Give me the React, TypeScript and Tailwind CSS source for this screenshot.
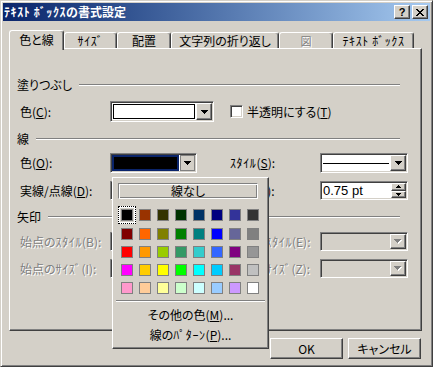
import React from "react";

const raised =
  "border border-t-white border-l-white border-r-[#404040] border-b-[#404040] shadow-[inset_-1px_-1px_#808080]";
const sunken =
  "border border-t-[#808080] border-l-[#808080] border-r-white border-b-white shadow-[inset_1px_1px_#404040,inset_-1px_-1px_#d4d0c8] p-[1px]";
const etched =
  "border border-t-[#808080] border-l-[#808080] border-r-white border-b-white shadow-[inset_1px_1px_#ffffff,inset_-1px_-1px_#808080]";
const disabledText = "text-[#808080] [text-shadow:1px_1px_0_#ffffff]";

function H({ children }: { children: React.ReactNode }) {
  return <span className="[font-feature-settings:normal] tracking-[0.6px]">{children}</span>;
}

function Arrow({ disabled }: { disabled?: boolean }) {
  if (disabled)
    return (
      <svg width="8" height="5" viewBox="0 0 8 5" shapeRendering="crispEdges">
        <path d="M1 1h7v1H1zM2 2h5v1H2zM3 3h3v1H3zM4 4h1v1H4z" fill="#ffffff" />
        <path d="M0 0h7v1H0zM1 1h5v1H1zM2 2h3v1H2zM3 3h1v1H3z" fill="#808080" />
      </svg>
    );
  return (
    <svg width="7" height="4" viewBox="0 0 7 4" shapeRendering="crispEdges">
      <path d="M0 0h7v1H0zM1 1h5v1H1zM2 2h3v1H2zM3 3h1v1H3z" fill="#000000" />
    </svg>
  );
}

function DropBtn({ disabled }: { disabled?: boolean }) {
  return (
    <div className={`w-[16px] h-full bg-[#d4d0c8] flex items-center justify-center ${raised}`}>
      <Arrow disabled={disabled} />
    </div>
  );
}

function HeaderRow({ label }: { label: string }) {
  return (
    <div className="flex items-center h-[14px] pl-[7px] pr-[21px]">
      <span className="leading-[14px]">{label}</span>
      <div className="flex-1 ml-[7px] border-t border-t-[#808080] border-b border-b-white" />
    </div>
  );
}

const palette = [
  ["#000000", "#993300", "#333300", "#003300", "#003366", "#000080", "#333399", "#333333"],
  ["#800000", "#FF6600", "#808000", "#008000", "#008080", "#0000FF", "#666699", "#808080"],
  ["#FF0000", "#FF9900", "#99CC00", "#339966", "#33CCCC", "#3366FF", "#800080", "#969696"],
  ["#FF00FF", "#FFCC00", "#FFFF00", "#00FF00", "#00FFFF", "#00CCFF", "#993366", "#C0C0C0"],
  ["#FF99CC", "#FFCC99", "#FFFF99", "#CCFFCC", "#CCFFFF", "#99CCFF", "#CC99FF", "#FFFFFF"],
];

function Tab({ w, selected, children }: { w: number; selected?: boolean; children: React.ReactNode }) {
  const base =
    "flex items-center justify-center rounded-t-[3px] border-t border-l border-r border-t-white border-l-white border-r-[#404040] shadow-[inset_-1px_0_#808080] bg-[#d4d0c8] whitespace-nowrap";
  return (
    <div
      className={`${base} ${selected ? "relative z-10 h-[20px] -mb-[2px] pb-[2px]" : "h-[16px]"}`}
      style={{ width: w }}
    >
      <span className="leading-[14px]">{children}</span>
    </div>
  );
}

export default function App() {
  return (
    <div className="relative w-[433px] h-[367px] bg-[#d4d0c8] text-black text-[12px] whitespace-nowrap [font-family:'Noto_Sans_CJK_JP','Noto_Sans_CJK_SC',sans-serif] [font-feature-settings:'palt'] border border-t-[#d4d0c8] border-l-[#d4d0c8] border-r-[#404040] border-b-[#404040] shadow-[inset_1px_1px_#ffffff,inset_-1px_-1px_#808080] p-[2px] overflow-hidden">
      {/* Title bar */}
      <div className="h-[18px] flex items-center justify-between pl-[1px] pr-[2px] bg-linear-to-r from-[#0a246a] to-[#a6caf0]">
        <span className="text-white font-bold leading-[14px]">
          <H>ﾃｷｽﾄ ﾎﾞｯｸｽ</H>の書式設定
        </span>
        <div className="flex gap-[2px]">
          <div className={`w-[16px] h-[14px] bg-[#d4d0c8] flex items-center justify-center ${raised}`}>
            <span className="[font-family:'Liberation_Sans',sans-serif] font-bold text-[11px] leading-[11px]">?</span>
          </div>
          <div className={`w-[16px] h-[14px] bg-[#d4d0c8] flex items-center justify-center ${raised}`}>
            <svg width="8" height="7" viewBox="0 0 8 7" shapeRendering="crispEdges">
              <path
                d="M0 0h2v1H0zM6 0h2v1H6zM1 1h2v1H1zM5 1h2v1H5zM2 2h4v1H2zM3 3h2v1H3zM2 4h4v1H2zM1 5h2v1H1zM5 5h2v1H5zM0 6h2v1H0zM6 6h2v1H6z"
                fill="#000"
              />
            </svg>
          </div>
        </div>
      </div>

      {/* Tabs */}
      <div className="flex items-end h-[18px] ml-[6px] mt-[9px]">
        <Tab w={55} selected>
          色と線
        </Tab>
        <Tab w={53}>
          <H>ｻｲｽﾞ</H>
        </Tab>
        <Tab w={54}>配置</Tab>
        <Tab w={108}>文字列の折り返し</Tab>
        <Tab w={54}>
          <span className={`text-[11px] ${disabledText}`}>図</span>
        </Tab>
        <Tab w={81}>
          <H>ﾃｷｽﾄ ﾎﾞｯｸｽ</H>
        </Tab>
      </div>

      {/* Panel */}
      <div className="relative ml-[6px] w-[413px] h-[283px] flex flex-col border border-t-white border-l-white border-r-[#404040] border-b-[#404040] shadow-[inset_-1px_-1px_#808080]">
        <div className="mt-[29px]">
          <HeaderRow label="塗りつぶし" />
        </div>

        {/* Row 1 */}
        <div className="mt-[9px] h-[21px] flex items-center pl-[10px]">
          <div className="w-[210px] h-full flex items-center">
            <span className="w-[90px] leading-[14px]">
              色(<span className="underline">C</span>):
            </span>
            <div className={`w-[104px] h-full bg-white flex ${sunken}`}>
              <div className="flex-1 p-[1px]">
                <div className="w-full h-full border border-black bg-white" />
              </div>
              <DropBtn />
            </div>
          </div>
          <div className={`w-[13px] h-[13px] bg-white ${sunken}`} />
          <span className="ml-[4px] leading-[14px]">
            半透明にする(<span className="underline">T</span>)
          </span>
        </div>

        <div className="mt-[10px]">
          <HeaderRow label="線" />
        </div>

        {/* Row 2 */}
        <div className="mt-[7px] h-[20px] flex items-center pl-[10px]">
          <div className="w-[210px] h-full flex items-center">
            <span className="w-[90px] leading-[14px]">
              色(<span className="underline">O</span>):
            </span>
            <div className={`w-[87px] h-full bg-white flex ${sunken}`}>
              <div className="flex-1 bg-[#0a246a] p-[2px] mr-[1px]">
                <div className="w-full h-full bg-black" />
              </div>
              <div className="w-[15px] h-full bg-[#d4d0c8] border border-[#808080] flex items-center justify-center">
                <Arrow />
              </div>
            </div>
          </div>
          <span className="w-[90px] leading-[14px]">
            <H>ｽﾀｲﾙ</H>(<span className="underline">S</span>):
          </span>
          <div className={`w-[88px] h-full bg-white flex ${sunken}`}>
            <div className="flex-1 flex items-center px-[1px]">
              <div className="w-full h-px bg-black" />
            </div>
            <DropBtn />
          </div>
        </div>

        {/* Row 3 */}
        <div className="mt-[8px] h-[19px] flex items-center pl-[10px]">
          <div className="w-[210px] h-full flex items-center">
            <span className="w-[90px] leading-[14px]">
              実線/点線(<span className="underline">D</span>):
            </span>
            <div className={`w-[104px] h-full bg-white flex ${sunken}`}>
              <div className="flex-1" />
              <DropBtn />
            </div>
          </div>
          <span className="w-[90px] leading-[14px]">
            太さ(<span className="underline">W</span>):
          </span>
          <div className={`w-[88px] h-full bg-white flex ${sunken}`}>
            <div className="flex-1 flex items-center pl-[1px] leading-[14px] [font-family:'Liberation_Sans',sans-serif] text-[13px]">
              0.75 pt
            </div>
            <div className="w-[15px] h-full flex flex-col">
              <div className={`flex-1 bg-[#d4d0c8] flex items-center justify-center ${raised}`}>
                <svg width="5" height="3" viewBox="0 0 5 3" shapeRendering="crispEdges">
                  <path d="M2 0h1v1H2zM1 1h3v1H1zM0 2h5v1H0z" fill="#000" />
                </svg>
              </div>
              <div className={`flex-1 bg-[#d4d0c8] flex items-center justify-center ${raised}`}>
                <svg width="5" height="3" viewBox="0 0 5 3" shapeRendering="crispEdges">
                  <path d="M0 0h5v1H0zM1 1h3v1H1zM2 2h1v1H2z" fill="#000" />
                </svg>
              </div>
            </div>
          </div>
        </div>

        <div className="mt-[10px]">
          <HeaderRow label="矢印" />
        </div>

        {/* Row 4 */}
        <div className="mt-[8px] h-[19px] flex items-center pl-[10px]">
          <div className="w-[210px] h-full flex items-center">
            <span className={`w-[90px] leading-[14px] ${disabledText}`}>
              始点の<H>ｽﾀｲﾙ</H>(B):
            </span>
            <div className={`w-[88px] h-full bg-[#d4d0c8] flex ${sunken}`}>
              <div className="flex-1" />
              <DropBtn disabled />
            </div>
          </div>
          <span className={`w-[90px] leading-[14px] ${disabledText}`}>
            終点の<H>ｽﾀｲﾙ</H>(E):
          </span>
          <div className={`w-[88px] h-full bg-[#d4d0c8] flex ${sunken}`}>
            <div className="flex-1" />
            <DropBtn disabled />
          </div>
        </div>

        {/* Row 5 */}
        <div className="mt-[8px] h-[19px] flex items-center pl-[10px]">
          <div className="w-[210px] h-full flex items-center">
            <span className={`w-[90px] leading-[14px] ${disabledText}`}>
              始点の<H>ｻｲｽﾞ</H>(I):
            </span>
            <div className={`w-[88px] h-full bg-[#d4d0c8] flex ${sunken}`}>
              <div className="flex-1" />
              <DropBtn disabled />
            </div>
          </div>
          <span className={`w-[90px] leading-[14px] ${disabledText}`}>
            終点の<H>ｻｲｽﾞ</H>(Z):
          </span>
          <div className={`w-[88px] h-full bg-[#d4d0c8] flex ${sunken}`}>
            <div className="flex-1" />
            <DropBtn disabled />
          </div>
        </div>
      </div>

      {/* Buttons */}
      <div className="mt-[7px] flex justify-end gap-[5px] pr-[9px]">
        <div className={`w-[73px] h-[21px] bg-[#d4d0c8] flex items-center justify-center ${raised}`}>
          <span className="leading-[14px]">OK</span>
        </div>
        <div className={`w-[73px] h-[21px] bg-[#d4d0c8] flex items-center justify-center ${raised}`}>
          <span className="leading-[14px]">キャンセル</span>
        </div>
      </div>

      {/* Color popup */}
      <div className="absolute left-[111px] top-[176px] z-20 w-[157px] h-[172px] bg-[#d4d0c8] border border-t-white border-l-white border-r-[#404040] border-b-[#404040] shadow-[inset_-1px_-1px_#808080]">
        <div className={`ml-[5px] mt-[5px] w-[140px] h-[16px] flex items-center justify-center ${etched}`}>
          <span className="leading-[14px]">線なし</span>
        </div>
        <div className="ml-[5px] mt-[7px] grid grid-cols-[repeat(8,18px)] grid-rows-[18px_19px_18px_18px_18px]">
          {palette.flat().map((c, i) => (
            <div
              key={i}
              className={`flex items-center justify-center ${
                i === 0 ? "w-[18px] h-[18px] border border-dotted border-black bg-white" : ""
              }`}
            >
              <div
                className={`w-[12px] h-[12px] border border-[#808080] ${i === 0 ? "outline outline-1 outline-[#d4d0c8]" : ""}`}
                style={{ backgroundColor: c }}
              />
            </div>
          ))}
        </div>
        <div className="mx-[3px] mt-[3px] border-t border-t-[#808080] border-b border-b-white" />
        <div className="mt-[4px] h-[18px] flex items-center justify-center">
          <span className="leading-[14px]">
            その他の色(<span className="underline">M</span>)...
          </span>
        </div>
        <div className="mt-[2px] h-[18px] flex items-center justify-center">
          <span className="leading-[14px]">
            線の<H>ﾊﾟﾀｰﾝ</H>(<span className="underline">P</span>)...
          </span>
        </div>
      </div>
    </div>
  );
}
